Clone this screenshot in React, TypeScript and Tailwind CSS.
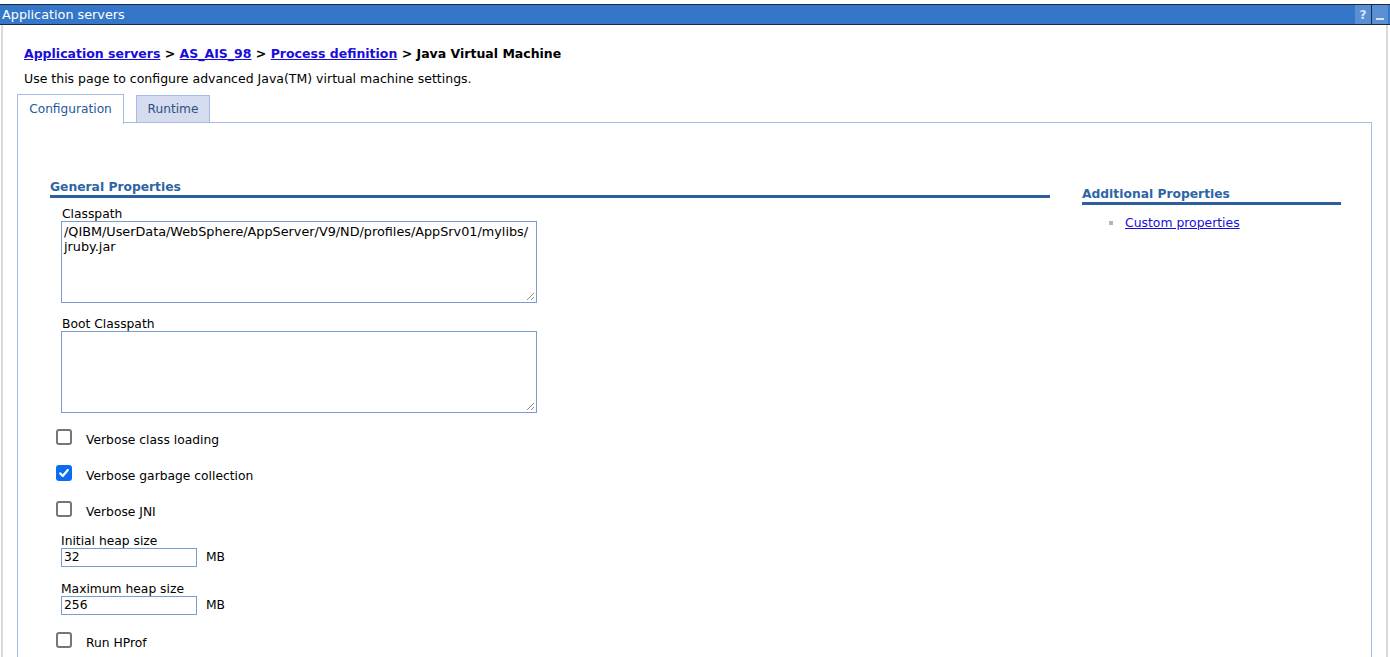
import React from 'react';

const font = { fontFamily: '"DejaVu Sans", Verdana, sans-serif' };

function Check({ checked, label }: { checked?: boolean; label: string }) {
  return (
    <div className="flex items-center h-[16px]">
      {checked ? (
        <span className="w-[16px] h-[16px] rounded-[3px] bg-[#0a6cf0] flex items-center justify-center">
          <svg width="12" height="12" viewBox="0 0 12 12">
            <path d="M2.2 6.4 L4.8 9 L9.8 3" stroke="white" strokeWidth="2.2" fill="none" strokeLinecap="round" strokeLinejoin="round" />
          </svg>
        </span>
      ) : (
        <span className="w-[16px] h-[16px] rounded-[3px] border-2 border-[#767676] bg-white" />
      )}
      <span className="ml-[14px] text-[12.3px] leading-[14px] text-black mt-[6px]">{label}</span>
    </div>
  );
}

function Field({ label, value }: { label: string; value: string }) {
  return (
    <div className="ml-[11px] flex flex-col">
      <span className="text-[12.3px] leading-[14px] text-black">{label}</span>
      <div className="flex items-center">
        <div className="w-[136px] h-[19px] border border-[#7a9cd3] bg-white text-[12.3px] leading-[17px] px-[2px]">{value}</div>
        <span className="ml-[9px] text-[12.3px]">MB</span>
      </div>
    </div>
  );
}

function Area({ label, value }: { label: string; value?: string }) {
  return (
    <div className="ml-[11px] flex flex-col">
      <span className="text-[12.3px] leading-[14px] ml-[1px] text-black">{label}</span>
      <div className="relative w-[476px] h-[82px] border border-[#7a9cd3] bg-white text-[12.8px] leading-[15px] px-[2px] py-[2px] whitespace-pre-wrap">
        {value}
        <svg className="absolute right-[1px] bottom-[1px]" width="10" height="10" viewBox="0 0 10 10">
          <path d="M9 2 L2 9 M9 6 L6 9" stroke="#8a8a8a" strokeWidth="1" />
        </svg>
      </div>
    </div>
  );
}

export default function App() {
  return (
    <div className="w-[1390px] h-[657px] bg-white overflow-hidden relative" style={font}>
      <div className="h-[4px]" />
      <div className="h-[21px] bg-[#3477c9] border-y border-[#1a2a44] flex items-center justify-between">
        <span className="text-white text-[12.8px] ml-[2px]">Application servers</span>
        <div className="flex h-full">
          <span className="w-[16px] h-full bg-[#5b8fd4] text-[#d6e4f7] text-[12px] font-bold flex items-center justify-center">?</span>
          <span className="w-[1px] h-full bg-[#1a2a44]" />
          <span className="w-[16px] h-full bg-[#5b8fd4] flex items-end justify-center pb-[4px]">
            <span className="w-[8px] h-[2px] bg-[#d6e4f7]" />
          </span>
          <span className="w-[2px] h-full" />
        </div>
      </div>
      <div className="flex h-[632px]">
        <div className="w-[2px] bg-[#d9d9d9] ml-[1px]" />
        <div className="flex-1 flex flex-col">
          <div className="ml-[21px] mt-[21px] text-[12.5px] font-bold text-black leading-[16px]">
            <a className="text-[#1a0dda] underline">Application servers</a> &gt;{' '}
            <a className="text-[#1a0dda] underline">AS_AIS_98</a> &gt;{' '}
            <a className="text-[#1a0dda] underline">Process definition</a> &gt; Java Virtual Machine
          </div>
          <div className="ml-[21px] mt-[10px] text-[12.5px] leading-[14px] text-black">
            Use this page to configure advanced Java(TM) virtual machine settings.
          </div>
          <div className="ml-[14px] mt-[7px] flex items-end h-[30px]">
            <div className="w-[107px] h-[30px] border border-b-0 border-[#a6bce6] bg-white text-[#26589a] text-[12.2px] flex items-center justify-center relative top-[1px]">
              Configuration
            </div>
            <div className="w-[12px] border-b border-[#a6bce6]" />
            <div className="w-[74px] h-[28px] border border-[#a6bce6] bg-[#d5dcef] text-[#2e4f80] text-[12.2px] flex items-center justify-center">
              Runtime
            </div>
            <div className="w-[1162px] border-b border-[#a6bce6]" />
          </div>
          <div className="ml-[14px] w-[1355px] flex-1 border-l border-r border-[#a6bce6] flex">
            <div className="w-[1000px] ml-[32px] mt-[57px] flex flex-col">
              <div className="text-[12.3px] font-bold text-[#2e65a5] leading-[14px]">General Properties</div>
              <div className="h-[3px] bg-[#2d5f9f] mt-[1px]" />
              <div className="mt-[9px]">
                <Area label="Classpath" value={'/QIBM/UserData/WebSphere/AppServer/V9/ND/profiles/AppSrv01/mylibs/\njruby.jar'} />
              </div>
              <div className="mt-[14px]">
                <Area label="Boot Classpath" />
              </div>
              <div className="mt-[16px] ml-[6px] flex flex-col gap-[20px]">
                <Check label="Verbose class loading" />
                <Check checked label="Verbose garbage collection" />
                <Check label="Verbose JNI" />
              </div>
              <div className="mt-[17px]">
                <Field label="Initial heap size" value="32" />
              </div>
              <div className="mt-[15px]">
                <Field label="Maximum heap size" value="256" />
              </div>
              <div className="mt-[17px] ml-[6px]">
                <Check label="Run HProf" />
              </div>
            </div>
            <div className="w-[259px] ml-[32px] mt-[64px] flex flex-col">
              <div className="text-[12.3px] font-bold text-[#2e65a5] leading-[14px]">Additional Properties</div>
              <div className="h-[3px] bg-[#2d5f9f] mt-[1px]" />
              <div className="flex items-center mt-[9px] ml-[27px]">
                <span className="w-[4px] h-[4px] bg-[#b5b5b5]" />
                <a className="ml-[12px] text-[12.4px] text-[#1a0dda] underline">Custom properties</a>
              </div>
            </div>
          </div>
        </div>
        <div className="w-[2px] bg-[#d9d9d9] mr-[2px]" />
      </div>
    </div>
  );
}
